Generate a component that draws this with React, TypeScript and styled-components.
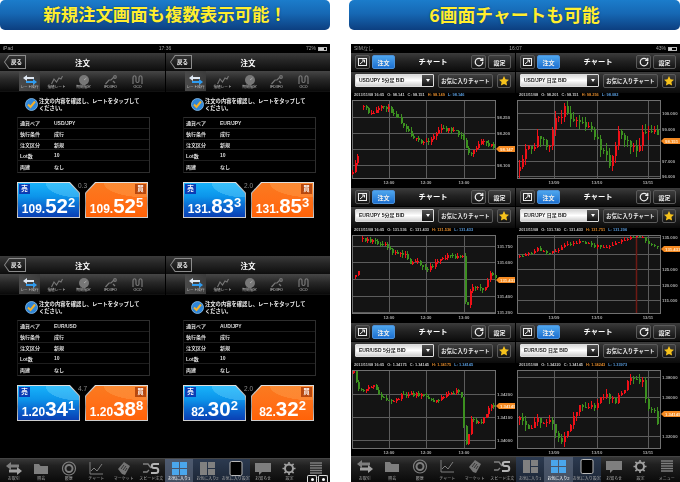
import React from "react";
import styled, { createGlobalStyle } from "styled-components";
import { RotateCw } from "lucide-react";

const GlobalStyle = createGlobalStyle`
  html, body {
    margin: 0;
    padding: 0;
    background: #fff;
  }
  body {
    font-family: "Liberation Sans", "Noto Sans CJK JP", sans-serif;
  }
  * {
    box-sizing: border-box;
  }
`;

const Page = styled.div`
  display: flex;
  justify-content: space-between;
  width: 680px;
  height: 482px;
  overflow: hidden;
`;

const Column = styled.section<{ $width: number }>`
  width: ${(p) => p.$width}px;
  display: flex;
  flex-direction: column;
`;

const Banner = styled.h2<{ $size: number }>`
  margin: 0 0 14px;
  height: 30px;
  border-radius: 5px;
  background: linear-gradient(#1b7ccb 0%, #1668b4 45%, #0c3f80 100%);
  color: #ffee2e;
  font: 700 ${(p) => p.$size}px/28px "Noto Sans CJK JP", sans-serif;
  text-align: center;
  text-shadow: 0 0 2px #0a3a78;
`;

const Screen = styled.div<{ $inset?: number }>`
  position: relative;
  height: 438px;
  margin-left: ${(p) => p.$inset ?? 0}px;
  background: #000;
  display: flex;
  flex-direction: column;
  filter: blur(0.3px);
`;

const StatusBar = styled.div`
  height: 9px;
  padding: 0 3px;
  display: grid;
  grid-template-columns: 1fr auto 1fr;
  align-items: center;
  color: #a0a0a0;
  font-size: 5px;
  line-height: 9px;
`;

const StatusEnd = styled.div`
  display: flex;
  justify-content: flex-end;
  align-items: center;
  gap: 2px;
`;

const Battery = styled.span<{ $level: number }>`
  display: inline-block;
  width: 9px;
  height: 4px;
  border: 1px solid #bbb;
  background: linear-gradient(90deg, #ccc ${(p) => p.$level}%, transparent ${(p) => p.$level}%);
`;

const OrderGrid = styled.div`
  display: grid;
  grid-template-columns: 165px 164px;
  grid-template-rows: 203px 202px;
  column-gap: 1px;
  background: #000;
  height: 405px;
`;

const ChartGrid = styled.div`
  display: grid;
  grid-template-columns: 164px 164px;
  grid-template-rows: 135px 135px 133px;
  column-gap: 1px;
  height: 403px;
`;

const Pane = styled.div`
  overflow: hidden;
  background: #000;
`;

const NavBar = styled.div`
  position: relative;
  height: 18px;
  display: flex;
  align-items: center;
  justify-content: center;
  background: linear-gradient(#3a3a3a 0%, #262626 40%, #0d0d0d 100%);
  color: #fff;
  font-size: 7.5px;
  font-weight: 700;
`;

const BackButton = styled.span`
  position: absolute;
  left: 4px;
  top: 2px;
  width: 22px;
  height: 14px;
  background: #8c8c8c;
  clip-path: polygon(22% 0, 100% 0, 100% 100%, 22% 100%, 0 50%);
  color: #eee;
  font-size: 5.5px;
  &::before {
    content: "";
    position: absolute;
    inset: 1px;
    background: linear-gradient(#333, #111);
    clip-path: polygon(22% 0, 100% 0, 100% 100%, 22% 100%, 0 50%);
  }
  & > span {
    position: absolute;
    inset: 0;
    padding-left: 3px;
    display: flex;
    align-items: center;
    justify-content: center;
  }
`;

const OrderTabs = styled.div`
  height: 21px;
  padding-left: 16px;
  display: flex;
  background: linear-gradient(#464646 0%, #262626 45%, #0a0a0a 100%);
  border-bottom: 1px solid #111;
`;

const OrderTab = styled.div<{ $active?: boolean }>`
  width: 27px;
  display: flex;
  flex-direction: column;
  align-items: center;
  justify-content: flex-end;
  padding-bottom: 1px;
  color: #ccc;
  font-size: 3.6px;
  line-height: 5px;
  white-space: nowrap;
  background: ${(p) => (p.$active ? "linear-gradient(90deg, transparent 3px, #4a4a4a 3px, #3c3c3c 24px, transparent 24px)" : "none")};
`;

const Message = styled.div`
  margin-top: 6px;
  padding-left: 25px;
  display: flex;
  gap: 1px;
  height: 18px;
`;

const MessageText = styled.p`
  margin: 0;
  width: 104px;
  color: #eee;
  font-size: 5.3px;
  line-height: 7px;
  font-weight: 700;
`;

const OrderTable = styled.div`
  width: 133px;
  height: 56px;
  margin: 1px 0 0 17px;
  border: 1px solid #2e2e2e;
  border-left-color: #181818;
  display: grid;
  grid-auto-rows: 1fr;
`;

const OrderRow = styled.div`
  display: grid;
  grid-template-columns: 34px 1fr;
  align-items: center;
  padding-left: 2px;
  border-bottom: 1px solid #1e1e1e;
  color: #ddd;
  font-size: 5px;
  font-weight: 700;
  &:last-child {
    border-bottom: none;
  }
`;

const RateRow = styled.div`
  position: relative;
  margin: 9px 0 0 17px;
  display: flex;
  gap: 5px;
`;

const Spread = styled.span`
  position: absolute;
  left: 61px;
  top: 0;
  color: #888;
  font-size: 6.5px;
  line-height: 7px;
`;

const sellShape = "polygon(0 0, 84% 0, 100% 30%, 100% 100%, 0 100%)";
const buyShape = "polygon(16% 0, 100% 0, 100% 100%, 0 100%, 0 30%)";

const RateFrame = styled.div<{ $side: "sell" | "buy" }>`
  width: 63px;
  height: 36px;
  padding: 1px;
  background: linear-gradient(#e0e0e0, #8e8e8e 60%, #d0d0d0);
  clip-path: ${(p) => (p.$side === "sell" ? sellShape : buyShape)};
`;

const RateFace = styled.div<{ $side: "sell" | "buy" }>`
  position: relative;
  height: 34px;
  padding-top: 13px;
  clip-path: ${(p) => (p.$side === "sell" ? sellShape : buyShape)};
  background: ${(p) =>
    p.$side === "sell"
      ? "radial-gradient(ellipse 90% 70% at 100% 0%, rgba(120,220,255,0.35) 60%, transparent 61%), linear-gradient(#17b2fa 0%, #0c94ea 40%, #0a62cc 72%, #0a3fb4 100%)"
      : "radial-gradient(ellipse 100% 60% at 100% 0%, rgba(255,170,90,0.35) 70%, transparent 71%), linear-gradient(#fa7a20 0%, #ff7018 50%, #ff6208 100%)"};
`;

const SideBadge = styled.span<{ $side: "sell" | "buy" }>`
  position: absolute;
  top: 1px;
  ${(p) => (p.$side === "sell" ? "left: 1px;" : "right: 1px;")}
  width: 11px;
  height: 10px;
  background: ${(p) => (p.$side === "sell" ? "#0a3cb4" : "#b8480e")};
  color: #fff;
  font-size: 6.5px;
  line-height: 10px;
  text-align: center;
  font-weight: 700;
`;

const Price = styled.div`
  color: #fff;
  font-weight: 700;
  font-size: 12px;
  line-height: 20px;
  text-align: center;
  white-space: nowrap;
`;

const PriceBig = styled.span`
  font-size: 20.5px;
`;

const PriceSup = styled.span`
  font-size: 13px;
  line-height: 0;
  vertical-align: 6px;
`;

const TabBar = styled.div<{ $height: number }>`
  height: ${(p) => p.$height}px;
  display: flex;
  background: linear-gradient(#363636 0%, #202020 30%, #0a0a0a 100%);
  border-top: 1px solid #444;
`;

const TabGroup = styled.div<{ $width: number; $tint?: boolean }>`
  width: ${(p) => p.$width}px;
  display: flex;
  background: ${(p) => (p.$tint ? "linear-gradient(#2c3a50, #1c2636)" : "none")};
`;

const TabItem = styled.div<{ $active?: boolean }>`
  flex: 1;
  min-width: 0;
  display: flex;
  flex-direction: column;
  align-items: center;
  justify-content: space-between;
  padding: 2px 0 1px;
  color: ${(p) => (p.$active ? "#fff" : "#a8a8a8")};
  font-size: 4px;
  line-height: 5px;
  white-space: nowrap;
  background: ${(p) => (p.$active ? "rgba(120,130,150,0.45)" : "none")};
`;

const CameraBadge = styled.div`
  position: absolute;
  right: 2px;
  bottom: 0;
  display: flex;
  gap: 1px;
  height: 7px;
`;

const CameraCell = styled.span`
  width: 10px;
  height: 7px;
  border: 1px solid #ddd;
  border-bottom: none;
  border-radius: 2px 2px 0 0;
  background: #111;
  display: flex;
  align-items: center;
  justify-content: center;
  &::before {
    content: "";
    width: 3px;
    height: 3px;
    border-radius: 50%;
    background: #fff;
  }
`;

const ToolBar = styled.div`
  height: 19px;
  padding: 2px 4px 0;
  display: flex;
  align-items: flex-start;
  gap: 2px;
  background: linear-gradient(#3c3c3c 0%, #222 45%, #0c0c0c 100%);
  border-bottom: 1px solid #000;
`;

const ToolButton = styled.span<{ $width: number; $blue?: boolean; $tiny?: boolean }>`
  width: ${(p) => p.$width}px;
  height: 14px;
  flex: none;
  border-radius: 2px;
  border: 1px solid ${(p) => (p.$blue ? "#4a90d8" : "#5a5a5a")};
  background: ${(p) => (p.$blue ? "linear-gradient(#4ea6ee, #1c6fd0)" : "linear-gradient(#3e3e3e, #141414)")};
  color: #eee;
  font-size: ${(p) => (p.$tiny ? 5.4 : 6)}px;
  font-weight: 700;
  white-space: nowrap;
  display: flex;
  align-items: center;
  justify-content: center;
`;

const ToolTitle = styled.span`
  flex: 1;
  color: #fff;
  font-size: 7.3px;
  font-weight: 700;
  line-height: 14px;
  text-align: center;
`;

const SelectRow = styled.div`
  height: 21px;
  padding: 2px 4px 0;
  display: flex;
  align-items: flex-start;
  gap: 4px;
  background: linear-gradient(#3c3c3c 0%, #202020 50%, #0a0a0a 100%);
`;

const PairSelect = styled.div`
  width: 79px;
  height: 13px;
  flex: none;
  display: flex;
  border: 1px solid #ddd;
  border-radius: 1px;
  background: linear-gradient(#d8d8d8, #fff 50%, #cfcfcf);
`;

const PairName = styled.span`
  flex: 1;
  padding-left: 3px;
  color: #222;
  font-size: 5px;
  font-weight: 700;
  line-height: 11px;
  white-space: nowrap;
`;

const PairArrow = styled.span`
  width: 11px;
  background: linear-gradient(#555, #111);
  display: flex;
  align-items: center;
  justify-content: center;
  &::before {
    content: "";
    border: 2px solid transparent;
    border-top: 3px solid #fff;
    border-bottom: none;
  }
`;

const InfoLine = styled.div`
  height: 7px;
  padding-left: 3px;
  display: flex;
  gap: 3px;
  color: #c8c8c8;
  font-size: 3.9px;
  font-weight: 700;
  line-height: 4px;
  white-space: nowrap;
`;

const InfoHigh = styled.span`
  color: #e08a2c;
`;

const InfoLow = styled.span`
  color: #5a9ee0;
`;

const ChartFrame = styled.div`
  padding-left: 1px;
  height: 88px;
`;

// icons ---------------------------------------------------------------------

const grad = "#7e7e7e";

const SmallIcon = ({ name }: { name: string }) => {
  switch (name) {
    case "trade":
      return (
        <svg width="14" height="10" viewBox="0 0 14 10">
          <path d="M0 3 4 0v2h7v2H4v2z" fill="#dfe8f2" />
          <path d="M14 7l-4-3v2H3v2h7v2z" fill="#2f9cf0" />
        </svg>
      );
    case "limit":
      return (
        <svg width="12" height="10" viewBox="0 0 12 10" fill="none" stroke="#777" strokeWidth="1.1">
          <path d="M0.5 9 3 4l2.500 3L8 3l2 1 1.500-3" />
        </svg>
      );
    case "time":
      return (
        <svg width="10" height="10" viewBox="0 0 10 10">
          <circle cx="5" cy="5" r="5" fill="#777" />
          <path d="M5 5 7.500 3" stroke="#aaa" strokeWidth="1" />
        </svg>
      );
    case "ifd":
      return (
        <svg width="12" height="10" viewBox="0 0 12 10" fill="none" stroke="#777" strokeWidth="1.2">
          <path d="M0.500 9 4 5h2l3-3" />
          <circle cx="10" cy="2" r="1.300" />
          <path d="M8 6l2 2" />
        </svg>
      );
    default:
      return (
        <svg width="11" height="10" viewBox="0 0 11 10" fill="none" stroke="#777" strokeWidth="1.2">
          <path d="M1 9V3c0-3 3-3 3 0v3c0 2 3 2 3 0V3c0-3 3-3 3 0v6" />
        </svg>
      );
  }
};

const TabIcon = ({ name, active }: { name: string; active?: boolean }) => {
  const s = { width: 18, height: 15, viewBox: "0 0 18 15" };
  switch (name) {
    case "trade":
      return (
        <svg {...s}>
          <path d="M1 5 6 1v2.500h8v3H6V9z" fill={grad} />
          <path d="M17 10l-5-4v2.500H4v3h8V14z" fill="#a0a0a0" />
        </svg>
      );
    case "folder":
      return (
        <svg {...s}>
          <path d="M2 13V3h5l1.500 2H16v8z" fill={grad} />
        </svg>
      );
    case "dial":
      return (
        <svg {...s} fill="none" stroke={grad}>
          <circle cx="9" cy="7.500" r="6.500" strokeWidth="1.200" />
          <circle cx="9" cy="7.500" r="3.500" strokeWidth="2" />
        </svg>
      );
    case "chart":
      return (
        <svg {...s} fill="none" stroke={grad} strokeWidth="1">
          <path d="M3 1v12h13" />
          <path d="M4 10l3-3 3 3 5-7" />
        </svg>
      );
    case "market":
      return (
        <svg {...s}>
          <path d="M3 8 9 1l6 4-5 9-3-1z" fill="#747474" />
          <path d="M6 8l3-4M8 9l3-4M10 10l2-3" stroke="#333" strokeWidth="1" />
        </svg>
      );
    case "speed":
      return (
        <svg {...s}>
          <path d="M1 3h5l3 4M1 11h4l2-2" fill="none" stroke="#808080" strokeWidth="1.300" />
          <path d="M17 3h-5c-3 0-3 4 0 4h2c3 0 3 5 0 5H9" fill="none" stroke="#b4b4b4" strokeWidth="2" />
        </svg>
      );
    case "grid4":
      return (
        <svg {...s}>
          {[
            [2, 1],
            [10, 1],
            [2, 8],
            [10, 8],
          ].map(([x, y]) => (
            <rect key={`${x}${y}`} x={x} y={y} width="7" height="6" fill={active ? "#4aa6ec" : "#808080"} />
          ))}
        </svg>
      );
    case "grid3":
      return (
        <svg {...s}>
          <rect x="2" y="1" width="7" height="13" fill={active ? "#4aa6ec" : "#808080"} />
          <rect x="10" y="1" width="7" height="6" fill={active ? "#4aa6ec" : "#808080"} />
          <rect x="10" y="8" width="7" height="6" fill={active ? "#4aa6ec" : "#808080"} />
        </svg>
      );
    case "tablet":
      return (
        <svg {...s}>
          <rect x="3" y="0.500" width="12" height="14" rx="1.500" fill="#000" stroke="#b8b8b8" />
        </svg>
      );
    case "bubble":
      return (
        <svg {...s}>
          <path d="M1 2h16v9H8l-3 3v-3H1z" fill={grad} />
        </svg>
      );
    case "gear":
      return (
        <svg {...s}>
          <circle cx="9" cy="7.500" r="4" fill="none" stroke="#a0a0a0" strokeWidth="2" />
          <path d="M9 1v2.500M9 11.500V14M2.500 7.500H5M13 7.500h2.500M4.400 2.900l1.800 1.800M11.800 10.300l1.800 1.800M4.400 12.100l1.800-1.800M11.800 4.700l1.800-1.800" stroke="#a0a0a0" strokeWidth="1.600" />
        </svg>
      );
    default:
      return (
        <svg {...s}>
          <path d="M3 2h12M3 4.500h12M3 7h12M3 9.500h12M3 12h12" stroke={grad} strokeWidth="1.600" />
        </svg>
      );
  }
};

const CheckIcon = () => (
  <svg width="13" height="13" viewBox="0 0 13 13">
    <circle cx="6.500" cy="6.500" r="6" fill="#2f86d8" stroke="#8fc4f0" strokeWidth="0.800" />
    <path d="M3 6.500 5.500 9 10 3.500" fill="none" stroke="#f4b02a" strokeWidth="2" />
  </svg>
);

const ExpandIcon = () => (
  <svg width="9" height="8" viewBox="0 0 9 8" fill="none" stroke="#eee" strokeWidth="1">
    <rect x="0.500" y="0.500" width="8" height="7" />
    <path d="M2 6l4-3.500M4 2h2.500v2.500" />
  </svg>
);

const StarIcon = () => (
  <svg width="10" height="10" viewBox="0 0 10 10">
    <path d="M5 0l1.500 3.300 3.500.4-2.600 2.400.7 3.500L5 7.900 1.900 9.600l.7-3.500L0 3.700l3.500-.4z" fill="#f6c21c" />
  </svg>
);

// chart ---------------------------------------------------------------------

type Pt = [number, number];

interface ChartSpec {
  pair: string;
  info: string[];
  segments: Pt[][];
  step: number;
  noise: number;
  seed: number;
  vLines: number[];
  hLines: [number, string][];
  times: string[];
  tag: [number, string];
  marker?: number;
}

const interp = (pts: Pt[], x: number) => {
  for (let i = 1; i < pts.length; i++) {
    if (x <= pts[i][0]) {
      const t = (x - pts[i - 1][0]) / (pts[i][0] - pts[i - 1][0] || 1);
      return pts[i - 1][1] + (pts[i][1] - pts[i - 1][1]) * t;
    }
  }
  return pts[pts.length - 1][1];
};

const makeCandles = (spec: ChartSpec) => {
  let s = spec.seed;
  const rnd = () => {
    s = (s * 16807) % 2147483647;
    return s / 2147483647;
  };
  const out: { x: number; open: number; close: number; hi: number; lo: number }[] = [];
  spec.segments.forEach((pts) => {
    let prev = pts[0][1];
    for (let x = pts[0][0]; x <= pts[pts.length - 1][0]; x += spec.step) {
      const close = Math.max(1, Math.min(78, interp(pts, x) + (rnd() - 0.5) * spec.noise));
      const top = Math.min(prev, close);
      const bottom = Math.max(prev, close);
      out.push({
        x: Math.round(x),
        open: prev,
        close,
        hi: Math.max(0.5, top - rnd() * spec.noise * 0.9),
        lo: Math.min(78.5, bottom + rnd() * spec.noise * 0.9),
      });
      prev = close;
    }
  });
  return out;
};

const PriceChart = ({ spec }: { spec: ChartSpec }) => {
  const candles = makeCandles(spec);
  const [tagY, tagText] = spec.tag;
  return (
    <svg width="163" height="88" viewBox="0 0 163 88">
      <rect x="0.500" y="0.500" width="143" height="78" fill="#141414" stroke="#707070" />
      {spec.vLines.map((x) => (
        <path key={x} d={`M${x + 0.5} 1V78`} stroke="#5c5c5c" />
      ))}
      {spec.hLines.map(([y]) => (
        <path key={y} d={`M1 ${y + 0.5}H143`} stroke="#5c5c5c" />
      ))}
      {spec.marker !== undefined && <path d={`M${spec.marker + 0.5} 3V78`} stroke="#6e1a14" strokeWidth="1.500" />}
      <g shapeRendering="crispEdges">
        {candles.map((c) => {
          const up = c.close < c.open;
          const top = Math.min(c.open, c.close);
          const h = Math.max(1, Math.abs(c.open - c.close));
          return (
            <g key={c.x} fill={up ? "#f01018" : "#3c9020"}>
              <rect x={c.x} y={c.hi} width="1" height={c.lo - c.hi} />
              <rect x={c.x} y={top} width="2" height={h} />
            </g>
          );
        })}
      </g>
      {spec.hLines.map(([y, label]) => (
        <text key={y} x="145" y={y + 2} fontSize="4.300" fontWeight="700" fill="#aaa">
          {label}
        </text>
      ))}
      {spec.vLines.map((x, i) => (
        <text key={x} x={x} y="84" fontSize="4.300" fontWeight="700" fill="#aaa" textAnchor="middle">
          {spec.times[i]}
        </text>
      ))}
      <path d={`M144 ${tagY}l3-3h16v6h-16z`} fill="#f58a22" />
      <text x="148" y={tagY + 1.7} fontSize="4.300" fontWeight="700" fill="#ffe8c8">
        {tagText}
      </text>
    </svg>
  );
};

const min5 = ["12:00", "12:30", "13:00"];
const daily = ["13/09", "13/10", "13/11"];

const charts: ChartSpec[] = [
  {
    pair: "USD/JPY 5分足 BID",
    info: ["2013/11/08 16:05", "O: 98.141", "C: 98.151", "H: 98.149", "L: 98.146"],
    segments: [
      [[0, 74], [6, 52]],
      [[11, 7], [18, 14], [32, 6], [43, 14], [53, 27], [60, 36], [68, 44], [78, 39], [87, 29], [98, 29], [110, 37], [117, 57], [123, 47], [130, 42], [143, 47]],
    ],
    step: 2.5,
    noise: 4,
    seed: 11,
    vLines: [37, 74, 112],
    hLines: [[17, "98.250"], [33, "98.200"], [49, ""], [65, "98.100"]],
    times: min5,
    tag: [49, "98.147"],
  },
  {
    pair: "USD/JPY 日足 BID",
    info: ["2013/11/08", "O: 98.201", "C: 98.151", "H: 98.256", "L: 98.082"],
    segments: [
      [[2, 71], [9, 47], [15, 54], [22, 34], [32, 47], [37, 21], [49, 7], [57, 24], [67, 24], [77, 37], [87, 56], [92, 64], [100, 34], [110, 41], [119, 54], [125, 36], [137, 32], [141, 41]],
    ],
    step: 3,
    noise: 9,
    seed: 29,
    vLines: [37, 80, 131],
    hLines: [[13, "100.000"], [29, "99.000"], [45, ""], [61, "97.000"], [76, "96.000"]],
    times: daily,
    tag: [41, "98.151"],
  },
  {
    pair: "EUR/JPY 5分足 BID",
    info: ["2013/11/08 16:05", "O: 131.536", "C: 131.433", "H: 131.536", "L: 131.433"],
    segments: [
      [[3, 42], [7, 32]],
      [[10, 4], [22, 7], [32, 9], [38, 16], [52, 19], [57, 27], [63, 26], [75, 34], [88, 24], [93, 21], [110, 22], [112, 64], [116, 74], [118, 51], [132, 54], [137, 37], [143, 44]],
    ],
    step: 2.5,
    noise: 3.5,
    seed: 47,
    vLines: [37, 74, 112],
    hLines: [[11, "131.750"], [27, "131.600"], [44, ""], [61, "131.400"], [77, "131.200"]],
    times: min5,
    tag: [45, "131.433"],
  },
  {
    pair: "EUR/JPY 日足 BID",
    info: ["2013/11/08", "O: 131.740", "C: 131.433", "H: 131.751", "L: 131.206"],
    segments: [
      [[2, 22], [20, 14], [30, 19], [50, 9], [64, 6], [77, 11], [90, 12], [110, 3], [125, 2], [130, 8], [140, 12]],
    ],
    step: 3,
    noise: 2.5,
    seed: 71,
    vLines: [37, 80, 131],
    hLines: [[2, "135.000"], [19, ""], [34, "125.000"], [50, "120.000"], [65, "115.000"]],
    times: daily,
    tag: [14, "131.433"],
    marker: 119,
  },
  {
    pair: "EUR/USD 5分足 BID",
    info: ["2013/11/08 16:05", "O: 1.34175", "C: 1.34145", "H: 1.34175", "L: 1.34145"],
    segments: [
      [[1, 3], [5, 18], [12, 21], [20, 15], [27, 26], [38, 33], [52, 23], [67, 25], [83, 31], [95, 23], [108, 20], [112, 68], [114, 76], [118, 48], [128, 55], [137, 35], [143, 36]],
    ],
    step: 2.5,
    noise: 3.5,
    seed: 97,
    vLines: [37, 74, 112],
    hLines: [[24, "1.34200"], [47, "1.34100"], [70, "1.34000"]],
    times: min5,
    tag: [36, "1.34145"],
  },
  {
    pair: "EUR/USD 日足 BID",
    info: ["2013/11/08", "O: 1.34220", "C: 1.34145", "H: 1.34243", "L: 1.33973"],
    segments: [
      [[2, 50], [10, 60], [20, 50], [32, 51], [44, 71], [55, 51], [62, 35], [77, 36], [85, 25], [97, 31], [107, 18], [117, 6], [125, 11], [130, 38], [139, 40], [140, 51]],
    ],
    step: 3,
    noise: 6,
    seed: 131,
    vLines: [37, 80, 131],
    hLines: [[7, "1.38000"], [27, "1.36000"], [47, ""], [66, "1.32000"]],
    times: daily,
    tag: [44, "1.34145"],
  },
];

const ChartPane = ({ spec }: { spec: ChartSpec }) => (
  <Pane>
    <ToolBar>
      <ToolButton $width={15}>
        <ExpandIcon />
      </ToolButton>
      <ToolButton $width={23} $blue>
        注文
      </ToolButton>
      <ToolTitle>チャート</ToolTitle>
      <ToolButton $width={15}>
        <RotateCw size={10} strokeWidth={3} color="#eee" />
      </ToolButton>
      <ToolButton $width={23}>設定</ToolButton>
    </ToolBar>
    <SelectRow>
      <PairSelect>
        <PairName>{spec.pair}</PairName>
        <PairArrow />
      </PairSelect>
      <ToolButton $width={55} $tiny>
        お気に入りチャート
      </ToolButton>
      <ToolButton $width={14}>
        <StarIcon />
      </ToolButton>
    </SelectRow>
    <InfoLine>
      <span>{spec.info[0]}</span>
      <span>{spec.info[1]}</span>
      <span>{spec.info[2]}</span>
      <InfoHigh>{spec.info[3]}</InfoHigh>
      <InfoLow>{spec.info[4]}</InfoLow>
    </InfoLine>
    <ChartFrame>
      <PriceChart spec={spec} />
    </ChartFrame>
  </Pane>
);

// order panes ---------------------------------------------------------------

interface OrderSpec {
  pair: string;
  sell: [string, string, string];
  buy: [string, string, string];
  spread: string;
}

const orders: OrderSpec[] = [
  { pair: "USD/JPY", sell: ["109.", "52", "2"], buy: ["109.", "52", "5"], spread: "0.3" },
  { pair: "EUR/JPY", sell: ["131.", "83", "3"], buy: ["131.", "85", "3"], spread: "2.0" },
  { pair: "EUR/USD", sell: ["1.20", "34", "1"], buy: ["1.20", "38", "8"], spread: "4.7" },
  { pair: "AUD/JPY", sell: ["82.", "30", "2"], buy: ["82.", "32", "2"], spread: "2.0" },
];

const orderTabs = [
  { icon: "trade", label: "レート成行" },
  { icon: "limit", label: "指値レート" },
  { icon: "time", label: "期間指定" },
  { icon: "ifd", label: "IFD/IFO" },
  { icon: "oco", label: "OCO" },
];

const RateButton = ({ side, price }: { side: "sell" | "buy"; price: [string, string, string] }) => (
  <RateFrame $side={side}>
    <RateFace $side={side}>
      <SideBadge $side={side}>{side === "sell" ? "売" : "買"}</SideBadge>
      <Price>
        {price[0]}
        <PriceBig>{price[1]}</PriceBig>
        <PriceSup>{price[2]}</PriceSup>
      </Price>
    </RateFace>
  </RateFrame>
);

const OrderPane = ({ order }: { order: OrderSpec }) => (
  <Pane>
    <NavBar>
      <BackButton>
        <span>戻る</span>
      </BackButton>
      注文
    </NavBar>
    <OrderTabs>
      {orderTabs.map((t, i) => (
        <OrderTab key={t.icon} $active={i === 0}>
          <SmallIcon name={t.icon} />
          {t.label}
        </OrderTab>
      ))}
    </OrderTabs>
    <Message>
      <CheckIcon />
      <MessageText>注文の内容を確認し、レートをタップしてください。</MessageText>
    </Message>
    <OrderTable>
      {[
        ["通貨ペア", order.pair],
        ["執行条件", "成行"],
        ["注文区分", "新規"],
        ["Lot数", "10"],
        ["両建", "なし"],
      ].map(([k, v]) => (
        <OrderRow key={k}>
          <span>{k}</span>
          <span>{v}</span>
        </OrderRow>
      ))}
    </OrderTable>
    <RateRow>
      <RateButton side="sell" price={order.sell} />
      <RateButton side="buy" price={order.buy} />
      <Spread>{order.spread}</Spread>
    </RateRow>
  </Pane>
);

const Tabs = ({ activeIcon, height, first }: { activeIcon: string; height: number; first: [string, string, string] }) => (
  <TabBar $height={height}>
    <TabGroup $width={165}>
      {[
        ["trade", "お取引"],
        ["folder", "照会"],
        ["dial", "履歴"],
        ["chart", "チャート"],
        ["market", "マーケット"],
        ["speed", "スピード注文"],
      ].map(([icon, label]) => (
        <TabItem key={icon}>
          <TabIcon name={icon} />
          {label}
        </TabItem>
      ))}
    </TabGroup>
    <TabGroup $width={85} $tint>
      {first.map((icon, i) => (
        <TabItem key={icon} $active={icon === activeIcon}>
          <TabIcon name={icon} active={icon === activeIcon} />
          {["お気に入り1", "お気に入り2", "お気に入り設定"][i]}
        </TabItem>
      ))}
    </TabGroup>
    <TabGroup $width={79}>
      {[
        ["bubble", "お知らせ"],
        ["gear", "設定"],
        ["menu", "メニュー"],
      ].map(([icon, label]) => (
        <TabItem key={icon}>
          <TabIcon name={icon} />
          {label}
        </TabItem>
      ))}
    </TabGroup>
  </TabBar>
);

export default function App() {
  return (
    <Page>
      <GlobalStyle />
      <Column $width={330}>
        <Banner $size={17.4}>新規注文画面も複数表示可能！</Banner>
        <Screen>
          <StatusBar>
            <span>iPad</span>
            <span>17:36</span>
            <StatusEnd>
              72%
              <Battery $level={72} />
            </StatusEnd>
          </StatusBar>
          <OrderGrid>
            {orders.map((o) => (
              <OrderPane key={o.pair} order={o} />
            ))}
          </OrderGrid>
          <Tabs activeIcon="grid4" height={24} first={["grid4", "grid3", "tablet"]} />
          <CameraBadge>
            <CameraCell />
            <CameraCell />
          </CameraBadge>
        </Screen>
      </Column>
      <Column $width={331}>
        <Banner $size={17.8}>6画面チャートも可能</Banner>
        <Screen $inset={2}>
          <StatusBar>
            <span>SIMなし</span>
            <span>16:07</span>
            <StatusEnd>
              43%
              <Battery $level={43} />
            </StatusEnd>
          </StatusBar>
          <ChartGrid>
            {charts.map((c) => (
              <ChartPane key={c.pair} spec={c} />
            ))}
          </ChartGrid>
          <Tabs activeIcon="grid4" height={26} first={["grid3", "grid4", "tablet"]} />
        </Screen>
      </Column>
    </Page>
  );
}
